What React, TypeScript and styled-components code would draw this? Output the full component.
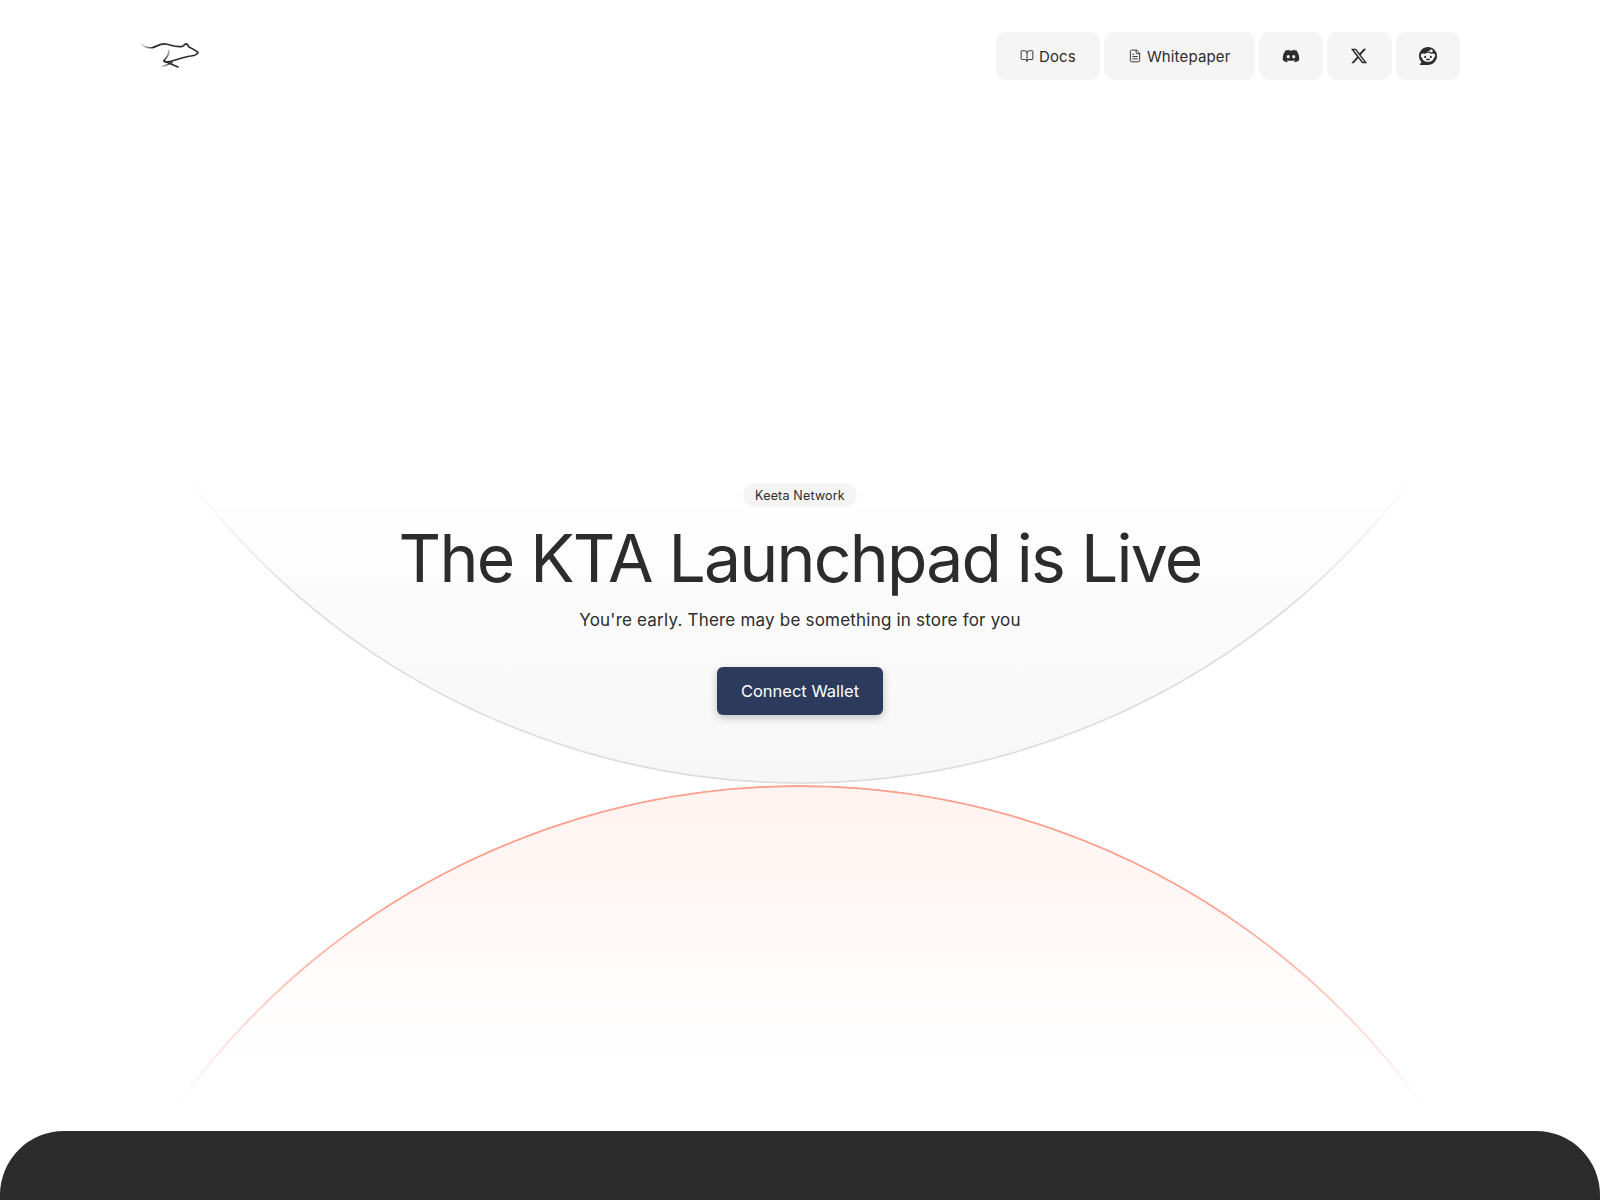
import React from "react";
import styled, { createGlobalStyle } from "styled-components";
import { BookOpen, FileText } from "lucide-react";
import { FaDiscord, FaReddit, FaXTwitter } from "react-icons/fa6";

const Global = createGlobalStyle`
  html, body { margin: 0; padding: 0; background: #fff; }
  body { font-family: Inter, "Liberation Sans", sans-serif; color: #2d2c2d; overflow: hidden; }
`;

const Page = styled.div`
  position: relative;
  width: 1600px;
  height: 1200px;
  overflow: hidden;
  display: flex;
  flex-direction: column;
`;

const Arc = styled.div<{ $tone: "grey" | "coral" }>`
  position: absolute;
  left: 32px;
  width: 1536px;
  height: 1536px;
  box-sizing: border-box;
  border-radius: 50%;
  pointer-events: none;
  ${(p) =>
    p.$tone === "grey"
      ? `
    top: -752px;
    border: 2px solid #dedede;
    background: linear-gradient(to top, #f7f7f7 0%, #fdfdfd 18%, #fff 24%);
    -webkit-mask-image: linear-gradient(to top, #000 0%, #000 12%, transparent 20%);
    mask-image: linear-gradient(to top, #000 0%, #000 12%, transparent 20%);
  `
      : `
    top: 785px;
    border: 2px solid #ffa08f;
    background: linear-gradient(to bottom, #fff3f0 0%, #fff 20%);
    -webkit-mask-image: linear-gradient(to bottom, #000 0%, #000 8%, transparent 21%);
    mask-image: linear-gradient(to bottom, #000 0%, #000 8%, transparent 21%);
  `}
`;

const Header = styled.header`
  position: relative;
  height: 112px;
  padding: 32px 140px 0 140px;
  box-sizing: border-box;
  display: flex;
  justify-content: space-between;
  align-items: flex-start;
`;

const LogoMark = styled.svg`
  display: block;
  margin-top: 9px;
  width: 64px;
  height: 30px;
`;

const Nav = styled.nav`
  display: flex;
  gap: 4px;
`;

const NavButton = styled.a<{ $square?: boolean }>`
  height: 48px;
  box-sizing: border-box;
  padding: 0 ${(p) => (p.$square ? "0" : "24px")};
  width: ${(p) => (p.$square ? "64.5px" : "auto")};
  display: flex;
  align-items: center;
  justify-content: center;
  gap: 5px;
  background: #f5f5f5;
  border-radius: 10px;
  color: #2d2c2d;
  font-size: 15px;
  font-weight: 400;
  letter-spacing: 0.01em;
`;

const Hero = styled.main`
  position: relative;
  display: flex;
  flex-direction: column;
  align-items: center;
  padding-top: 371px;
  flex: 1;
`;

const Badge = styled.span`
  height: 24px;
  box-sizing: border-box;
  padding: 0 12px;
  display: flex;
  align-items: center;
  border-radius: 12px;
  background: #f5f5f5;
  font-size: 12.5px;
  letter-spacing: 0.015em;
  color: #2d2c2d;
`;

const Title = styled.h1`
  margin: 11px 0 0;
  font-size: 66px;
  line-height: 80px;
  font-weight: 400;
  letter-spacing: -0.027em;
  color: #2d2c2d;
  white-space: nowrap;
`;

const Subtitle = styled.p`
  margin: 9px 0 0;
  font-size: 17px;
  line-height: 26px;
  letter-spacing: 0.012em;
  color: #2d2c2d;
`;

const ConnectButton = styled.button`
  margin-top: 34px;
  width: 166px;
  height: 48px;
  border: 0;
  border-radius: 6px;
  background: #2c3a5c;
  color: #fff;
  font-family: inherit;
  font-size: 16.5px;
  font-weight: 400;
  box-shadow: 0 3px 8px rgba(0, 0, 0, 0.22);
`;

const Footer = styled.footer`
  position: relative;
  height: 69px;
  flex: none;
  background: #2d2c2d;
  border-radius: 64px 64px 0 0;
`;

function Logo() {
  return (
    <LogoMark viewBox="0 0 64 30" fill="none">
      <defs>
        <linearGradient id="tail" x1="0" y1="0" x2="1" y2="0">
          <stop offset="0" stopColor="#2d2c2d" stopOpacity="0.05" />
          <stop offset="1" stopColor="#2d2c2d" />
        </linearGradient>
        <linearGradient id="foot" x1="0" y1="0" x2="1" y2="0">
          <stop offset="0" stopColor="#2d2c2d" stopOpacity="0.25" />
          <stop offset="1" stopColor="#2d2c2d" />
        </linearGradient>
        <linearGradient id="hind" x1="0" y1="0" x2="0" y2="1">
          <stop offset="0" stopColor="#2d2c2d" stopOpacity="0.2" />
          <stop offset="1" stopColor="#2d2c2d" />
        </linearGradient>
      </defs>
      <path d="M0.5 2.5C4 6 8 7.5 13 6.5" stroke="url(#tail)" strokeWidth="1.4" strokeLinecap="round" />
      <path
        d="M13 6.5C17 5 21 2.5 26 3C31 3.5 34 6.5 42 5.5C44 5 45 2 47 3L49 6C52 7.5 56 9.5 58 11.5C57 14 55 14.5 51 15C45 15.5 38 18.5 30 20.5C27 21 25 21.5 24 20"
        stroke="#2d2c2d"
        strokeWidth="1.7"
        strokeLinecap="round"
        strokeLinejoin="round"
      />
      <path d="M28.5 9C30 12 28 15 24.5 19" stroke="url(#hind)" strokeWidth="1.7" strokeLinecap="round" />
      <path d="M24 20L38 26" stroke="#2d2c2d" strokeWidth="1.7" strokeLinecap="round" />
      <path d="M22 25.5C25 25 28 23.5 32 21.5" stroke="url(#foot)" strokeWidth="1.5" strokeLinecap="round" />
    </LogoMark>
  );
}

export default function App() {
  return (
    <>
      <Global />
      <Page>
        <Arc $tone="grey" />
        <Arc $tone="coral" />
        <Header>
          <Logo />
          <Nav>
            <NavButton>
              <BookOpen size={14} strokeWidth={1.6} />
              Docs
            </NavButton>
            <NavButton>
              <FileText size={14} strokeWidth={1.6} />
              Whitepaper
            </NavButton>
            <NavButton $square>
              <FaDiscord size={18} />
            </NavButton>
            <NavButton $square>
              <FaXTwitter size={18} />
            </NavButton>
            <NavButton $square>
              <FaReddit size={18} />
            </NavButton>
          </Nav>
        </Header>
        <Hero>
          <Badge>Keeta Network</Badge>
          <Title>The KTA Launchpad is Live</Title>
          <Subtitle>You're early. There may be something in store for you</Subtitle>
          <ConnectButton>Connect Wallet</ConnectButton>
        </Hero>
        <Footer />
      </Page>
    </>
  );
}
